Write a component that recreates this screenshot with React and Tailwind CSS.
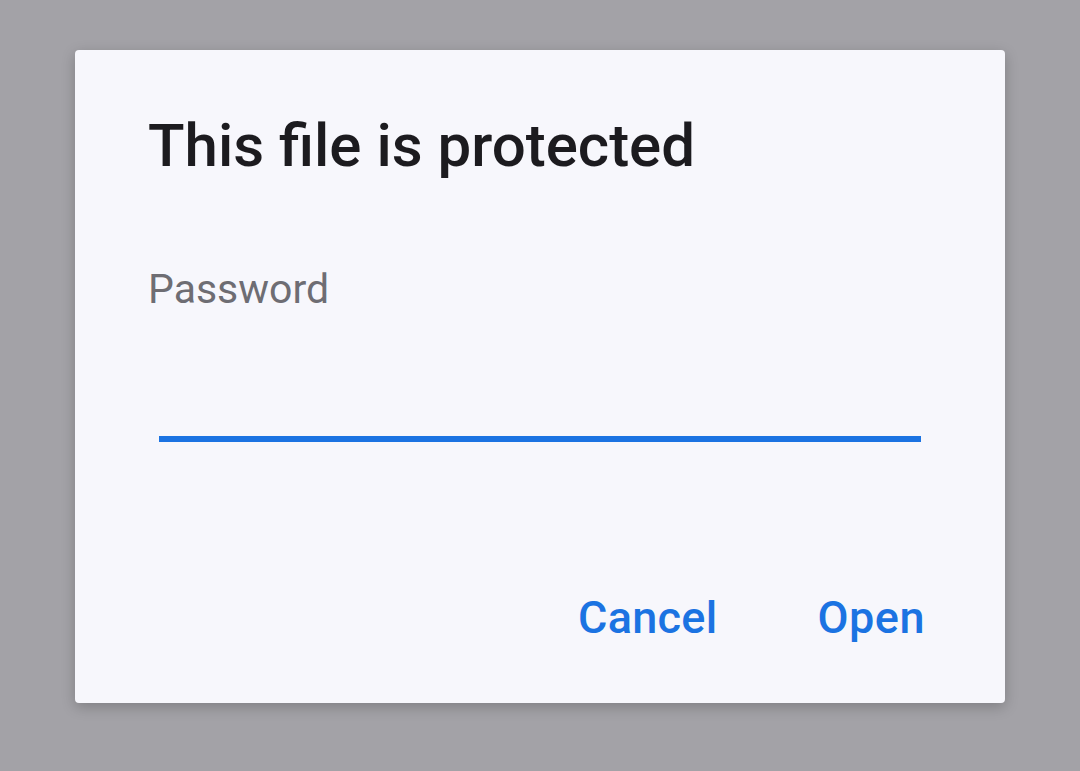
export default function App() {
  return (
    <div className="w-[1080px] h-[771px] bg-[#a3a2a7] pt-[50px] pl-[75px]" style={{ fontFamily: 'Roboto, "Noto Sans", sans-serif' }}>
      <div className="w-[930px] h-[653px] bg-[#f7f7fc] rounded-[4px] shadow-[0_4px_14px_rgba(0,0,0,0.22)] flex flex-col pl-[73px] pr-[80px] pt-[60px]">
        <h1 className="text-[60px] leading-[72px] font-medium text-[#1c1b1f]">This file is protected</h1>
        <div className="mt-[83px] text-[41px] leading-[48px] text-[#6e6d73]">Password</div>
        <div className="h-[129px] ml-[11px] mr-[4px] border-b-[6px] border-[#1b73e2]"></div>
        <div className="mt-[150px] flex justify-end gap-[100px] text-[45px] leading-[52px] font-medium text-[#1b73e2]">
          <button className="tracking-[0.3px]">Cancel</button>
          <button className="tracking-[0.5px]">Open</button>
        </div>
      </div>
    </div>
  );
}
